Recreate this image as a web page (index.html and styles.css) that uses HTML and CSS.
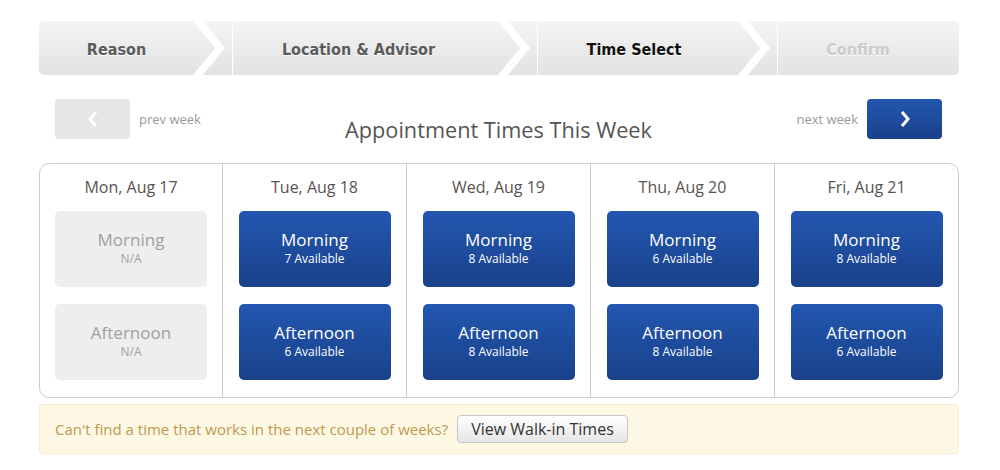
FILE: index.html
```html
<!DOCTYPE html>
<html lang="en">

<head>
    <meta charset="UTF-8">
    <meta name="viewport" content="width=device-width, initial-scale=1.0">
    <title>Appointment Times</title>
    <link rel="stylesheet" href="styles.css">
</head>

<body>
    <div class="page">
        <!-- pasos del proceso -->
        <div class="steps">
            <div class="step step-done step-1">Reason</div>
            <svg class="sep" width="44" height="54" viewBox="0 0 44 54">
                <polygon points="3,0 13,0 35,27 13,54 3,54 25,27" fill="#fff"/>
                <line x1="42.5" y1="0" x2="42.5" y2="54" stroke="#fff" stroke-width="1"/>
            </svg>
            <div class="step step-done step-2">Location &amp; Advisor</div>
            <svg class="sep" width="44" height="54" viewBox="0 0 44 54">
                <polygon points="3,0 13,0 35,27 13,54 3,54 25,27" fill="#fff"/>
                <line x1="42.5" y1="0" x2="42.5" y2="54" stroke="#fff" stroke-width="1"/>
            </svg>
            <div class="step step-current step-3">Time Select</div>
            <svg class="sep" width="44" height="54" viewBox="0 0 44 54">
                <polygon points="3,0 13,0 35,27 13,54 3,54 25,27" fill="#fff"/>
                <line x1="42.5" y1="0" x2="42.5" y2="54" stroke="#fff" stroke-width="1"/>
            </svg>
            <div class="step step-next step-4">Confirm</div>
        </div>

        <div class="week-nav">
            <div class="nav-side">
                <button class="nav-btn nav-prev">
                    <svg width="12" height="18" viewBox="0 0 12 18"><polyline points="9,2 3,9 9,16" fill="none" stroke="#fff" stroke-width="3"/></svg>
                </button>
                <span class="nav-label">prev week</span>
            </div>
            <h1 class="title">Appointment Times This Week</h1>
            <div class="nav-side">
                <span class="nav-label">next week</span>
                <button class="nav-btn nav-next">
                    <svg width="12" height="18" viewBox="0 0 12 18"><polyline points="3,2 9,9 3,16" fill="none" stroke="#fff" stroke-width="3"/></svg>
                </button>
            </div>
        </div>

        <div class="calendar">
            <div class="day">
                <div class="day-name">Mon, Aug 17</div>
                <div class="slot slot-off"><span class="slot-name">Morning</span><span class="slot-count">N/A</span></div>
                <div class="slot slot-off"><span class="slot-name">Afternoon</span><span class="slot-count">N/A</span></div>
            </div>
            <div class="day">
                <div class="day-name">Tue, Aug 18</div>
                <div class="slot"><span class="slot-name">Morning</span><span class="slot-count">7 Available</span></div>
                <div class="slot"><span class="slot-name">Afternoon</span><span class="slot-count">6 Available</span></div>
            </div>
            <div class="day">
                <div class="day-name">Wed, Aug 19</div>
                <div class="slot"><span class="slot-name">Morning</span><span class="slot-count">8 Available</span></div>
                <div class="slot"><span class="slot-name">Afternoon</span><span class="slot-count">8 Available</span></div>
            </div>
            <div class="day">
                <div class="day-name">Thu, Aug 20</div>
                <div class="slot"><span class="slot-name">Morning</span><span class="slot-count">6 Available</span></div>
                <div class="slot"><span class="slot-name">Afternoon</span><span class="slot-count">8 Available</span></div>
            </div>
            <div class="day">
                <div class="day-name">Fri, Aug 21</div>
                <div class="slot"><span class="slot-name">Morning</span><span class="slot-count">8 Available</span></div>
                <div class="slot"><span class="slot-name">Afternoon</span><span class="slot-count">6 Available</span></div>
            </div>
        </div>

        <div class="walkin">
            <span>Can't find a time that works in the next couple of weeks?</span>
            <button class="walkin-btn">View Walk-in Times</button>
        </div>
    </div>
</body>

</html>
```

FILE: styles.css
```css
body {
    margin: 0;
    padding: 0;
    background: #fff;
    font-family: "Open Sans", sans-serif;
}

.page {
    width: 920px;
    margin: 21px 0 0 39px;
}

/* pasos */
.steps {
    display: flex;
    height: 54px;
    border-radius: 5px;
    background: linear-gradient(#f4f4f4, #e2e2e2);
    overflow: hidden;
}

.step {
    display: flex;
    align-items: center;
    justify-content: center;
    padding-top: 2px;
    box-sizing: border-box;
    font-family: "DejaVu Sans Condensed", "DejaVu Sans", sans-serif;
    font-weight: bold;
    font-size: 16px;
    text-shadow: 0 1px 0 #fff;
}

.sep {
    flex: none;
    display: block;
}

.step-1 { width: 151px; padding-left: 4px; }
.step-2 { width: 261px; padding-right: 12px; }
.step-3 { width: 196px; padding-right: 6px; }
.step-4 { width: 180px; padding-right: 22px; }

.step-done { color: #5b5b5b; }
.step-current { color: #111; }
.step-next { color: #cbcbcb; }

/* navegacion semana */
.week-nav {
    display: flex;
    justify-content: space-between;
    align-items: flex-start;
    height: 40px;
    padding: 0 17px 0 16px;
    margin-top: 24px;
}

.nav-side {
    display: flex;
    align-items: center;
    gap: 9px;
    width: 200px;
}

.nav-side:last-child {
    justify-content: flex-end;
}

.nav-btn {
    width: 75px;
    height: 40px;
    border: 0;
    border-radius: 4px;
    display: flex;
    align-items: center;
    justify-content: center;
    padding: 0;
}

.nav-prev {
    background: #e6e6e6;
}

.nav-next {
    background: linear-gradient(#2257b0, #1a418a);
}

.nav-label {
    font-size: 13px;
    color: #9a9a9a;
}

.title {
    margin: 16px 0 0;
    font-size: 21.7px;
    font-weight: normal;
    color: #555;
    line-height: 30px;
}

/* calendario */
.calendar {
    margin-top: 24px;
    display: grid;
    grid-template-columns: 182px repeat(4, 1fr);
    border: 1px solid #ccc;
    border-radius: 10px;
}

.day {
    display: flex;
    flex-direction: column;
    align-items: center;
    gap: 17px;
    padding: 12px 0 17px;
}

.day + .day {
    border-left: 1px solid #ccc;
}

.day-name {
    font-size: 16px;
    line-height: 22px;
    color: #585450;
    margin-bottom: -4px;
}

.slot {
    width: 152px;
    height: 76px;
    box-sizing: border-box;
    padding-top: 18px;
    border-radius: 5px;
    background: linear-gradient(#2257b0, #1a418a);
    color: #fff;
    display: flex;
    flex-direction: column;
    align-items: center;
}

.slot-off {
    background: #eee;
    color: #a0a0a0;
}

.slot-name {
    font-size: 17px;
    line-height: 22px;
}

.slot-count {
    font-size: 12px;
    line-height: 15px;
}

/* aviso */
.walkin {
    margin-top: 6px;
    height: 50px;
    box-sizing: border-box;
    display: flex;
    align-items: center;
    gap: 9px;
    padding-left: 15px;
    background: #fcf8e3;
    border: 1px solid #faebcc;
    border-radius: 3px;
    color: #c09853;
    font-size: 15px;
}

.walkin-btn {
    height: 28px;
    padding: 0 13px;
    font-family: "Open Sans", sans-serif;
    font-size: 16px;
    color: #333;
    background: linear-gradient(#fff, #e6e6e6);
    border: 1px solid #c5c5c5;
    border-radius: 4px;
}
```
